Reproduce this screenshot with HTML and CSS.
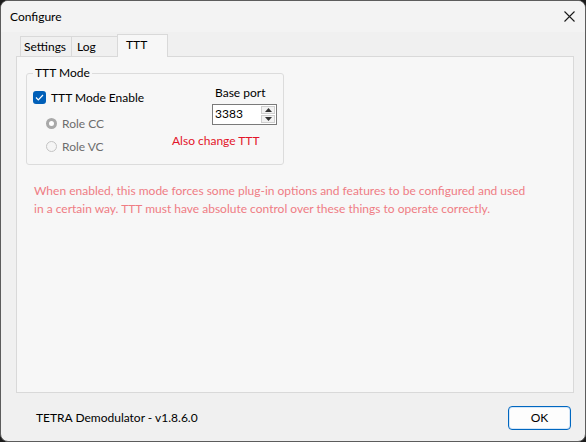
FILE: index.html
```html
<!DOCTYPE html>
<html>
<head>
<meta charset="utf-8">
<link rel="stylesheet" href="styles.css">
</head>
<body>
<div class="window">
  <div class="titlebar">
    <span class="title">Configure</span>
    <svg class="close" width="11" height="11" viewBox="0 0 11 11"><path d="M0.5 0.5 L10.5 10.5 M10.5 0.5 L0.5 10.5" stroke="#1a1a1a" stroke-width="1.1" fill="none"/></svg>
  </div>
  <div class="tabs">
    <div class="tab tab-settings">Settings</div>
    <div class="tab tab-log">Log</div>
    <div class="tab tab-ttt active">TTT</div>
  </div>
  <div class="panel">
    <fieldset class="group">
      <legend>TTT Mode</legend>
      <div class="group-grid">
        <div class="left-col">
          <label class="check">
            <span class="box"><svg width="9" height="7" viewBox="0 0 9 7"><path d="M1 3.5 L3.3 5.8 L8 1" stroke="#fff" stroke-width="1.2" fill="none"/></svg></span>
            TTT Mode Enable
          </label>
          <label class="radio radio-cc"><span class="dot checked"></span>Role CC</label>
          <label class="radio radio-vc"><span class="dot"></span>Role VC</label>
        </div>
        <div class="right-col">
          <div class="port-label">Base port</div>
          <div class="spinner">
            <span class="value">3383</span>
            <span class="arrows">
              <span class="arr"><svg width="7" height="4" viewBox="0 0 7 4"><path d="M0 4 L3.5 0 L7 4 Z" fill="#333"/></svg></span>
              <span class="arr"><svg width="7" height="4" viewBox="0 0 7 4"><path d="M0 0 L3.5 4 L7 0 Z" fill="#333"/></svg></span>
            </span>
          </div>
          <div class="warn">Also change TTT</div>
        </div>
      </div>
    </fieldset>
    <p class="note">When enabled, this mode forces some plug-in options and features to be configured and used in a certain way. TTT must have absolute control over these things to operate correctly.</p>
  </div>
  <div class="footer">
    <span class="version">TETRA Demodulator - v1.8.6.0</span>
    <button class="ok">OK</button>
  </div>
</div>
</body>
</html>
```

FILE: styles.css
```css
html, body {
  margin: 0;
  padding: 0;
  background: #1c1c1c;
}
body {
  font-family: "Lato", "Noto Sans", sans-serif;
  font-size: 12px;
  color: #000;
}
.window {
  width: 586px;
  height: 442px;
  box-sizing: border-box;
  background: #f0f0f0;
  border: 1px solid #5c5c5c;
  border-radius: 8px;
  overflow: hidden;
  display: flex;
  flex-direction: column;
}
.titlebar {
  height: 31px;
  background: #f3f3f3;
  display: flex;
  align-items: center;
  justify-content: space-between;
  padding: 0 10px 0 9px;
  flex: none;
}
.title {
  line-height: 16px;
  margin-top: 1px;
}
.close {
  margin-top: 0;
}
.tabs {
  display: flex;
  align-items: flex-end;
  margin: 2px 0 0 19px;
  height: 22px;
  flex: none;
}
.tab {
  height: 20px;
  line-height: 19px;
  box-sizing: border-box;
  border: 1px solid #d9d9d9;
  border-bottom: none;
  background: #f0f0f0;
  margin-right: -1px;
}
.tab-settings { width: 52px; padding-left: 3px; }
.tab-log { width: 47px; padding-left: 5px; }
.tab.active {
  width: 51px;
  height: 23px;
  margin: 0 0 -1px 0;
  background: #f7f7f7;
  padding-left: 8px;
  position: relative;
  z-index: 1;
  line-height: 19px;
}
.panel {
  margin-left: 15px;
  width: 558px;
  height: 337px;
  box-sizing: border-box;
  border: 1px solid #d9d9d9;
  background: #f7f7f7;
  padding: 9px 8px 0 9px;
  flex: none;
}
.group {
  margin: 0;
  width: 258px;
  height: 99px;
  box-sizing: border-box;
  border: 1px solid #dcdcdc;
  border-radius: 3px;
  padding: 0 0 0 6px;
}
.group legend {
  padding: 0 2px 0 2px;
  margin-left: 0;
  line-height: 14px;
}
.group-grid {
  display: flex;
}
.left-col {
  width: 139px;
  display: flex;
  flex-direction: column;
  padding-top: 9px;
}
.check {
  display: flex;
  align-items: center;
  height: 16px;
  gap: 5px;
}
.box {
  width: 13px;
  height: 13px;
  border-radius: 3px;
  background: #005fb8;
  display: flex;
  align-items: center;
  justify-content: center;
}
.radio {
  display: flex;
  align-items: center;
  height: 16px;
  margin-left: 13px;
  gap: 5px;
  color: #6d6d6d;
}
.radio-cc { margin-top: 10px; }
.radio-vc { margin-top: 7px; }
.dot {
  width: 11px;
  height: 11px;
  border-radius: 50%;
  border: 1px solid #c4c4c4;
  background: #f5f5f5;
  box-sizing: border-box;
}
.dot.checked {
  border: 3px solid #a9a9a9;
  background: #ffffff;
}
.right-col {
  display: flex;
  flex-direction: column;
  padding-top: 5px;
}
.port-label {
  margin-left: 43px;
  line-height: 16px;
}
.spinner {
  margin: 3px 0 0 40px;
  width: 65px;
  height: 21px;
  box-sizing: border-box;
  border: 1px solid #7a7a7a;
  background: #fff;
  display: flex;
  justify-content: space-between;
}
.value {
  padding-left: 2px;
  line-height: 18px;
}
.arrows {
  width: 14px;
  display: flex;
  flex-direction: column;
  gap: 1px;
  padding: 1px;
}
.arr {
  flex: 1;
  display: flex;
  align-items: center;
  justify-content: center;
  background: #f2f2f2;
  border: 1px solid #cfcfcf;
}
.warn {
  color: #e3152a;
  margin-top: 8px;
  line-height: 16px;
}
.note {
  margin: 17px 0 0 8px;
  color: #ef7c84;
  line-height: 18px;
  width: 498px;
}
.footer {
  display: flex;
  align-items: center;
  justify-content: space-between;
  padding: 0 14px 0 35px;
  flex: 1;
}
.ok {
  width: 63px;
  height: 24px;
  font: inherit;
  background: #fdfdfd;
  border: 1px solid #0067c0;
  border-radius: 4px;
  box-shadow: inset 0 0 0 1px #d4e6f8;
  margin-top: 1px;
}
```
